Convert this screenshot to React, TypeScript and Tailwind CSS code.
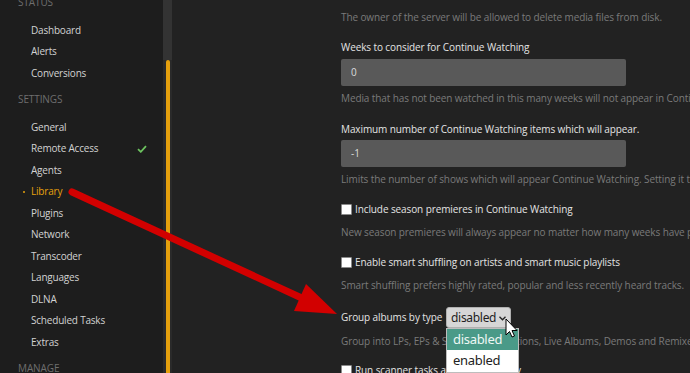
import React from 'react';

const sections = [
  { title: 'STATUS', items: ['Dashboard', 'Alerts', 'Conversions'] },
  {
    title: 'SETTINGS',
    items: [
      'General',
      'Remote Access',
      'Agents',
      'Library',
      'Plugins',
      'Network',
      'Transcoder',
      'Languages',
      'DLNA',
      'Scheduled Tasks',
      'Extras',
    ],
  },
  { title: 'MANAGE', items: [] as string[] },
];

const Check = () => (
  <svg width="10" height="8" viewBox="0 0 10 8" className="absolute left-[137px] top-[7px]">
    <path d="M1 4.2 L3.8 6.8 L9 1.2" fill="none" stroke="#6cc25f" strokeWidth="1.8" />
  </svg>
);

const Sidebar = () => (
  <div className="w-[163px] shrink-0 bg-[#1d1d1d] mt-[-8px]">
    {sections.map((s, i) => (
      <div key={s.title} className={i > 0 ? 'mt-[5px]' : ''}>
        <div className="h-[21.5px] flex items-center pl-[18px] text-[10px] tracking-[-0.1px] text-[#6e6e6e] mb-[6px]">
          {s.title}
        </div>
        {s.items.map(item => {
          const active = item === 'Library';
          return (
            <div
              key={item}
              className={`relative h-[21.5px] flex items-center pl-[31px] text-[10px] tracking-[-0.2px] ${
                active ? 'text-[#e5a00d]' : 'text-[#d2d2d2]'
              }`}
            >
              {active && <span className="absolute left-[23px] top-[9.5px] w-[2px] h-[2px] rounded-full bg-[#e5a00d]" />}
              {item}
              {item === 'Remote Access' && <Check />}
            </div>
          );
        })}
      </div>
    ))}
  </div>
);

const Scrollbar = () => (
  <div className="w-[9px] shrink-0 bg-[#2a2a2a] flex flex-col">
    <div className="h-[60px] bg-[#333]" />
    <div className="flex-1 flex justify-center">
      <div className="w-[4px] bg-[#e5a00d] rounded-t-full" />
    </div>
  </div>
);

const Help = ({ children, className = '' }: { children: React.ReactNode; className?: string }) => (
  <div className={`h-[16px] leading-[16px] text-[10px] tracking-[-0.1px] text-[#7a7a7a] whitespace-nowrap ${className}`}>
    {children}
  </div>
);

const Label = ({ children, className = '' }: { children: React.ReactNode; className?: string }) => (
  <div className={`h-[16px] leading-[16px] text-[10px] tracking-[-0.1px] text-[#e4e4e4] whitespace-nowrap ${className}`}>
    {children}
  </div>
);

const Box = () => (
  <span className="w-[11px] h-[11px] bg-white border border-[#8a8a8a] rounded-[1px] shrink-0 mr-[3px]" />
);

const CheckRow = ({ children, className = '' }: { children: React.ReactNode; className?: string }) => (
  <div className={`h-[16px] flex items-center text-[10px] tracking-[-0.1px] text-[#e4e4e4] whitespace-nowrap ${className}`}>
    <Box />
    {children}
  </div>
);

const Input = ({ value, className = '' }: { value: string; className?: string }) => (
  <div className={`w-[285px] h-[27px] bg-[#595959] rounded-[2px] flex items-center pl-[10px] text-[10px] text-[#dcdcdc] ${className}`}>
    {value}
  </div>
);

const Main = () => (
  <div className="flex-1 bg-[#222222] pl-[169px] overflow-hidden relative">
    <Help className="mt-[9px]">The owner of the server will be allowed to delete media files from disk.</Help>
    <Label className="mt-[14px]">Weeks to consider for Continue Watching</Label>
    <Input value="0" className="mt-[4px]" />
    <Help className="mt-[4px]">Media that has not been watched in this many weeks will not appear in Continue Watching.</Help>
    <Label className="mt-[15px]">Maximum number of Continue Watching items which will appear.</Label>
    <Input value="-1" className="mt-[3px]" />
    <Help className="mt-[4px]">Limits the number of shows which will appear Continue Watching. Setting it too high may impact performance.</Help>
    <CheckRow className="mt-[14px]">Include season premieres in Continue Watching</CheckRow>
    <Help className="mt-[7px]">New season premieres will always appear no matter how many weeks have passed since the last episode.</Help>
    <CheckRow className="mt-[14px]">Enable smart shuffling on artists and smart music playlists</CheckRow>
    <Help className="mt-[7px]">Smart shuffling prefers highly rated, popular and less recently heard tracks.</Help>
    <div className="mt-[14px] h-[21px] flex items-center text-[10px] tracking-[-0.1px] text-[#e4e4e4] whitespace-nowrap">
      <span className="w-[105px]">Group albums by type</span>
      <div className="relative w-[65px] h-[21px] bg-[#d6d6d6] border border-[#b0b0b0] rounded-[3px] flex items-center pl-[4px] text-[12px] tracking-[-0.3px] text-[#1e1e1e] font-['Noto_Sans',sans-serif]">
        disabled
        <svg width="7" height="5" viewBox="0 0 7 5" className="absolute right-[4px] top-[8px]">
          <path d="M0.5 0.8 L3.5 3.8 L6.5 0.8" fill="none" stroke="#222" strokeWidth="1.3" />
        </svg>
      </div>
    </div>
    <Help className="mt-[5px]">Group into LPs, EPs &amp; Singles, Compilations, Live Albums, Demos and Remixes.</Help>
    <CheckRow className="mt-[13px]">Run scanner tasks at a lower priority</CheckRow>
    <div className="absolute left-[274px] top-[328px] w-[73px] bg-white border border-[#bdbdbd] font-['Noto_Sans',sans-serif] text-[13px] tracking-[-0.3px]">
      <div className="h-[21px] bg-[#4a9a88] text-[#eef7f4] flex items-center pl-[6px]">disabled</div>
      <div className="h-[22px] text-[#222] flex items-center pl-[6px]">enabled</div>
    </div>
  </div>
);

export default function App() {
  return (
    <div className="relative w-[690px] h-[373px] overflow-hidden flex bg-[#222222] font-['Open_Sans',sans-serif]">
      <Sidebar />
      <Scrollbar />
      <Main />
      <svg width="690" height="373" className="absolute left-0 top-0 pointer-events-none">
        <line x1="72" y1="192" x2="306" y2="300" stroke="#d20000" strokeWidth="7" strokeLinecap="round" />
        <polygon points="337,314 294,311 306,284" fill="#d20000" />
        <path
          d="M506 319 L506 335 L509.5 331.5 L512 337 L514.5 336 L512 330.5 L517 330.5 Z"
          fill="#fff"
          stroke="#000"
          strokeWidth="1"
          strokeLinejoin="round"
        />
      </svg>
    </div>
  );
}
